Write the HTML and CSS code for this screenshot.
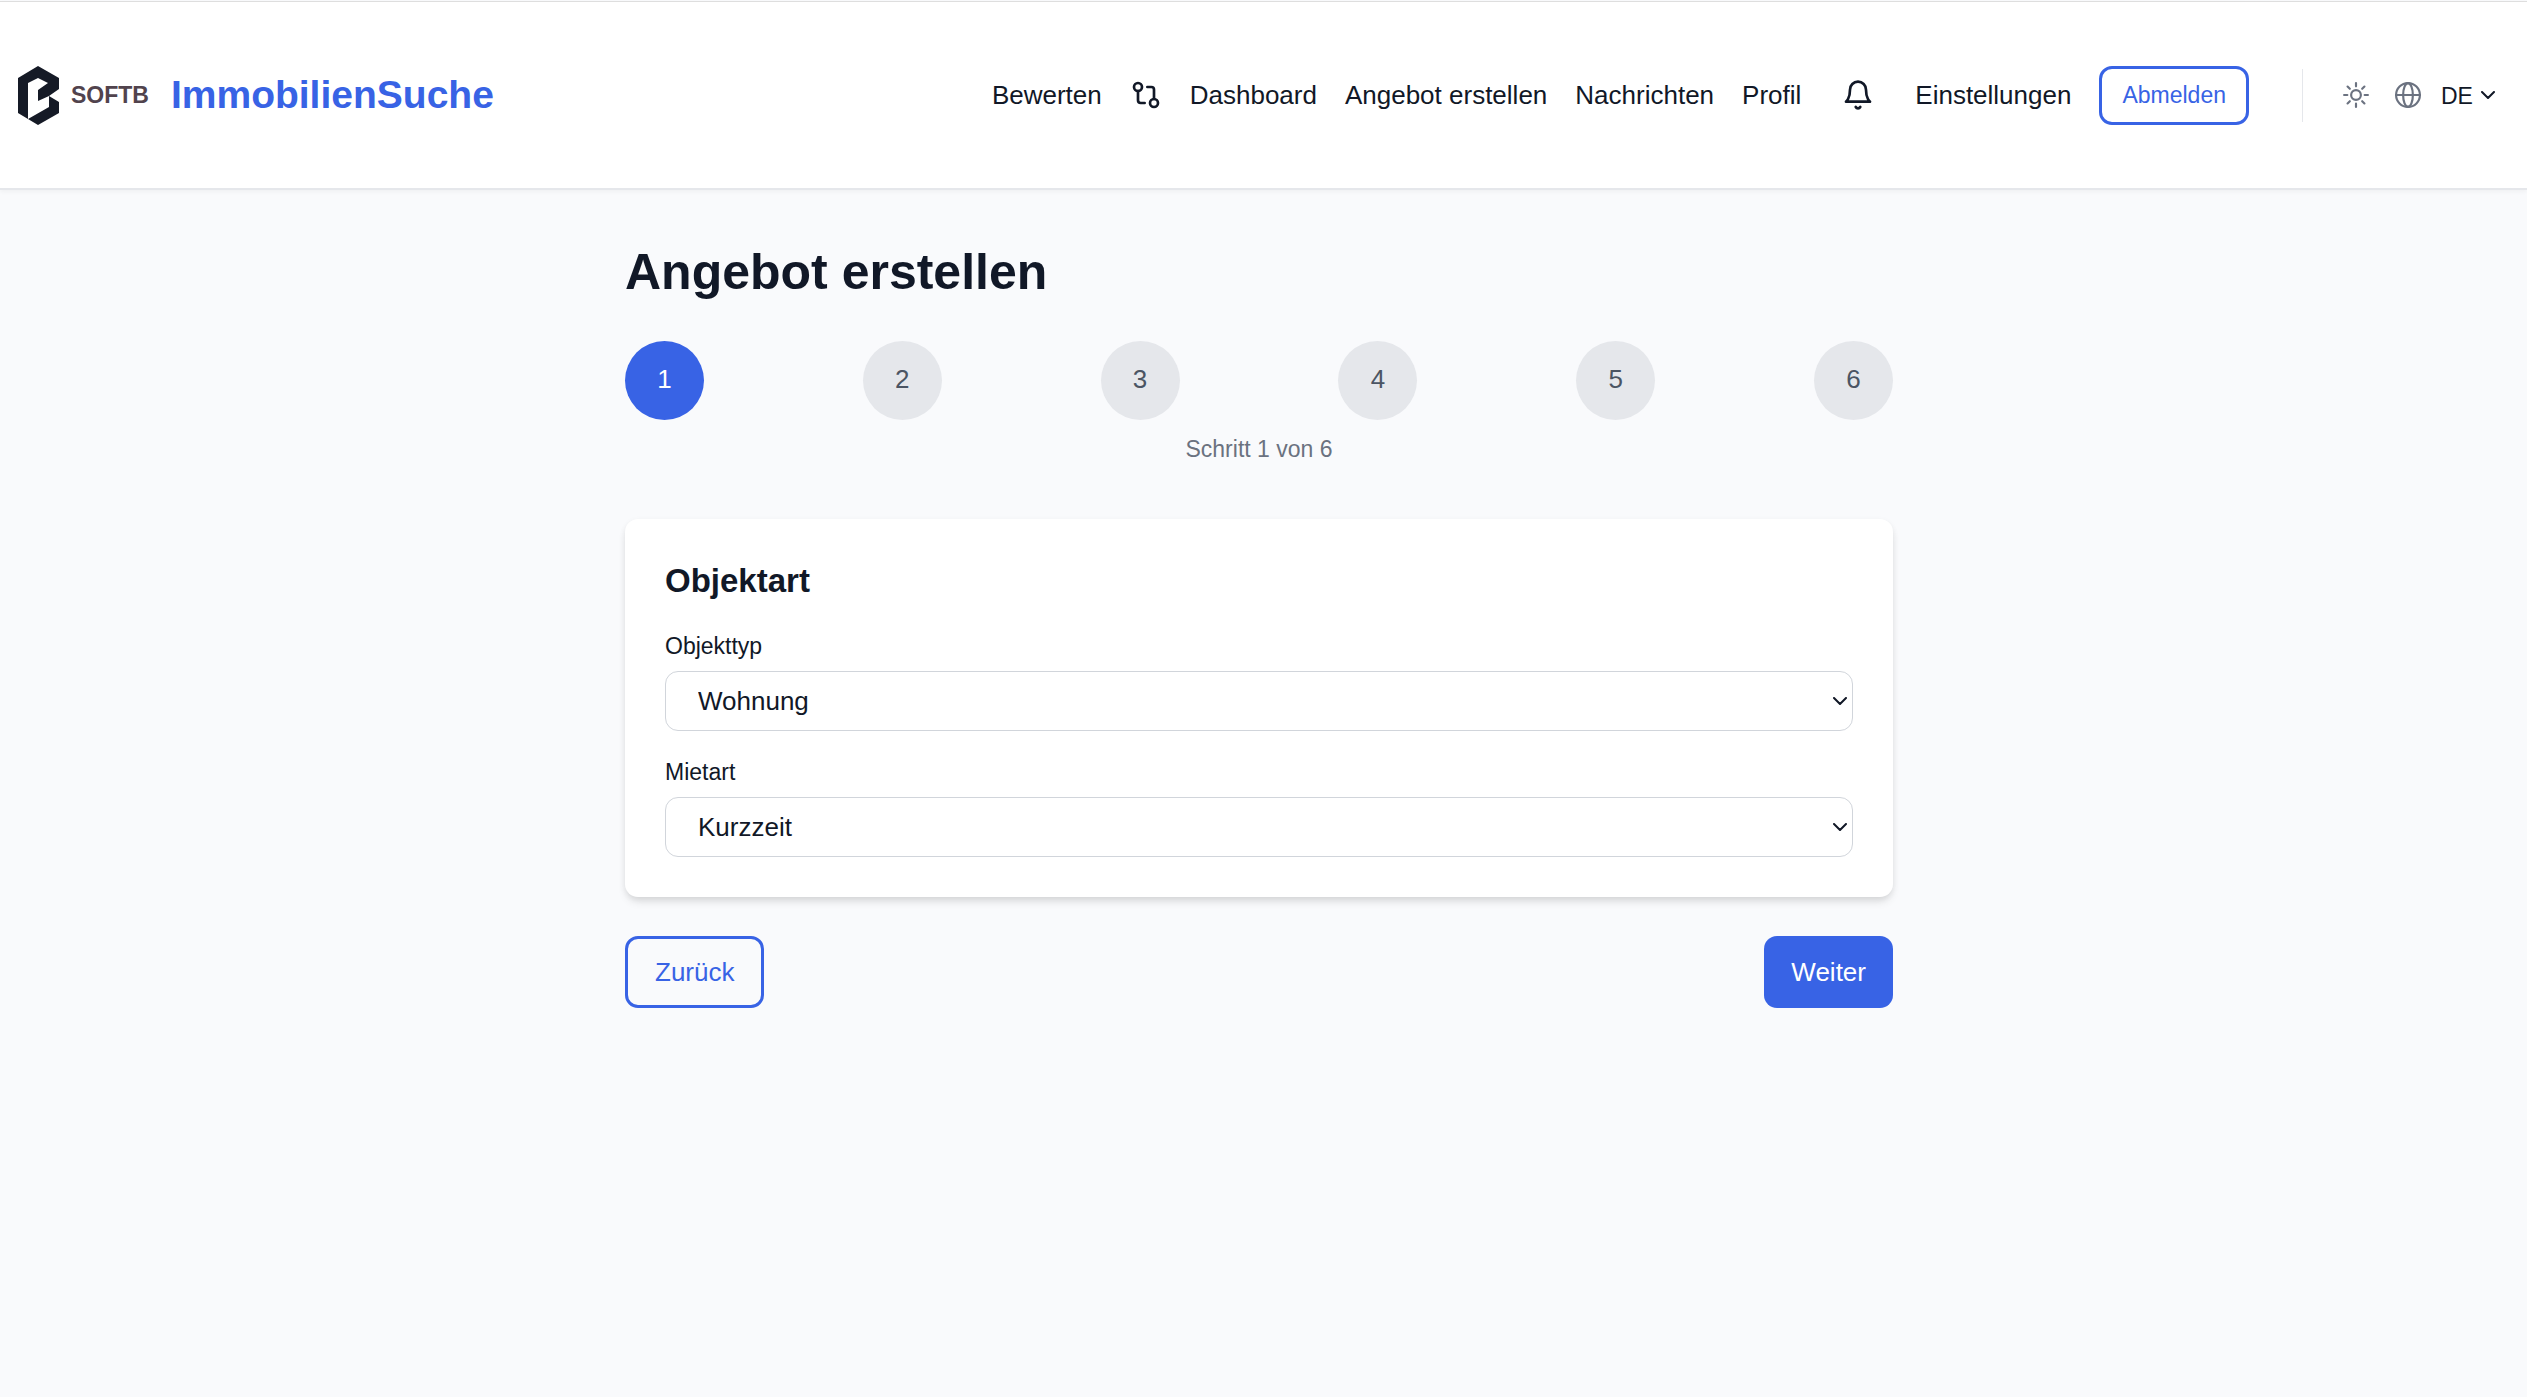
FILE: index.html
```html
<!DOCTYPE html>
<html lang="de">

<head>
  <meta charset="UTF-8" />
  <title>ImmobilienSuche – Angebot erstellen</title>
  <meta name="viewport" content="width=device-width, initial-scale=1.0" />
  <link rel="stylesheet" href="styles.css">
</head>

<body>

  <header class="site-header">
    <a class="brand" href="#">
      <svg class="brand-mark" viewBox="0 0 41 59" aria-hidden="true">
        <path fill="#151a26" fill-rule="evenodd" d="M20 0 41 12v11l-10 7 10 6v11L20 59 0 47V12zM20 12 10 17v36l21-12V30l-11 5V24l10-7z" />
      </svg>
      <span class="brand-company">SOFTB</span>
      <span class="brand-name">ImmobilienSuche</span>
    </a>

    <nav class="main-nav">
      <a href="#">Bewerten</a>
      <a class="nav-compare" href="#" aria-label="Vergleichen">
        <svg class="icon" viewBox="0 0 24 24" aria-hidden="true">
          <circle cx="6" cy="6" r="3" />
          <circle cx="18" cy="18" r="3" />
          <path d="M13 6h3a2 2 0 0 1 2 2v7M11 18H8a2 2 0 0 1-2-2V9" />
        </svg>
      </a>
      <a href="#">Dashboard</a>
      <a href="#">Angebot erstellen</a>
      <a href="#">Nachrichten</a>
      <a href="#">Profil</a>
      <button class="nav-bell" type="button" aria-label="Benachrichtigungen">
        <svg class="icon" viewBox="0 0 24 24" aria-hidden="true">
          <path d="M6 8a6 6 0 0 1 12 0c0 7 3 9 3 9H3s3-2 3-9M10.300 21a1.940 1.940 0 0 0 3.400 0" />
        </svg>
      </button>
      <a href="#">Einstellungen</a>
      <button class="btn-logout" type="button">Abmelden</button>
    </nav>

    <div class="preferences">
      <button class="theme-toggle" type="button" aria-label="Design wechseln">
        <svg class="icon-small" viewBox="0 0 24 24" aria-hidden="true">
          <circle cx="12" cy="12" r="4.500" />
          <path d="M12 1v3M12 20v3M1 12h3M20 12h3M4.200 4.200l2.100 2.100M17.700 17.700l2.100 2.100M4.200 19.800l2.100-2.100M17.700 6.300l2.100-2.100" />
        </svg>
      </button>
      <svg class="icon-small" viewBox="0 0 24 24" aria-hidden="true">
        <circle cx="12" cy="12" r="11" />
        <ellipse cx="12" cy="12" rx="4.500" ry="11" />
        <path d="M1 12h22" />
      </svg>
      <div class="select-wrap language">
        <select aria-label="Sprache">
          <option>DE</option>
          <option>EN</option>
        </select>
        <svg class="chevron" viewBox="0 0 14 8" aria-hidden="true"><path d="M1 1l6 6 6-6" /></svg>
      </div>
    </div>
  </header>

  <main class="wizard">
    <h1>Angebot erstellen</h1>

    <ol class="steps">
      <li class="active" aria-current="step">1</li>
      <li>2</li>
      <li>3</li>
      <li>4</li>
      <li>5</li>
      <li>6</li>
    </ol>
    <p class="step-text">Schritt 1 von 6</p>

    <form id="offer-form" class="card">
      <h2>Objektart</h2>
      <div class="field">
        <label for="object-type">Objekttyp</label>
        <div class="select-wrap">
          <select id="object-type">
            <option>Wohnung</option>
            <option>Haus</option>
          </select>
          <svg class="chevron" viewBox="0 0 14 8" aria-hidden="true"><path d="M1 1l6 6 6-6" /></svg>
        </div>
      </div>
      <div class="field">
        <label for="rent-type">Mietart</label>
        <div class="select-wrap">
          <select id="rent-type">
            <option>Kurzzeit</option>
            <option>Langzeit</option>
          </select>
          <svg class="chevron" viewBox="0 0 14 8" aria-hidden="true"><path d="M1 1l6 6 6-6" /></svg>
        </div>
      </div>
    </form>

    <div class="actions">
      <button class="btn btn-outline" type="button">Zurück</button>
      <button class="btn btn-primary" type="submit" form="offer-form">Weiter</button>
    </div>
  </main>

</body>

</html>
```
FILE: styles.css
```css
/* ─── BASE ───────────────────────────────────────────────────────── */
:root {
  --primary: #3863e5;
  --text: #111827;
  --muted: #6b7280;
  --line: #e5e7eb;
}

* {
  box-sizing: border-box;
  margin: 0;
  padding: 0;
}

body {
  min-height: 100vh;
  padding-top: 1px;
  background: #f9fafc;
  color: var(--text);
  font-family: "Liberation Sans", Arial, sans-serif;
  font-size: 26px;
  line-height: 40px;
}

a {
  color: inherit;
  text-decoration: none;
}

button,
select {
  font: inherit;
  color: inherit;
  background: none;
  border: none;
  cursor: pointer;
}

svg {
  display: block;
  flex: none;
  fill: none;
  stroke: currentColor;
  stroke-width: 2;
  stroke-linecap: round;
  stroke-linejoin: round;
}

/* ─── HEADER ─────────────────────────────────────────────────────── */
.site-header {
  display: flex;
  align-items: center;
  height: 189px;
  padding: 0 32px 0 18px;
  background: #fff;
  border-top: 1px solid #dedede;
  border-bottom: 2px solid var(--line);
  box-shadow: 0 2px 4px rgba(0, 0, 0, 0.04);
}

.brand {
  display: flex;
  align-items: center;
  margin-right: auto;
  font-weight: bold;
}

.brand-mark {
  width: 41px;
  height: 59px;
  margin-right: 12px;
  stroke: none;
}

.brand-company {
  margin-right: 22px;
  color: #51434d;
  font-size: 23px;
}

.brand-name {
  color: var(--primary);
  font-size: 39px;
}

.main-nav {
  display: flex;
  align-items: center;
  gap: 28px;
}

.icon {
  width: 32px;
  height: 32px;
}

.nav-bell {
  padding: 0 13px;
}

.btn-logout {
  height: 59px;
  padding: 0 20px;
  color: var(--primary);
  border: 3px solid var(--primary);
  border-radius: 13px;
  font-size: 23px;
}

.preferences {
  display: flex;
  align-items: center;
  gap: 26px;
  height: 53px;
  margin-left: 53px;
  padding-left: 40px;
  border-left: 1px solid var(--line);
  color: var(--muted);
}

.icon-small {
  width: 26px;
  height: 26px;
}

/* ─── SELECTS ────────────────────────────────────────────────────── */
.select-wrap {
  position: relative;
}

.select-wrap select {
  appearance: none;
  width: 100%;
  height: 60px;
  padding: 0 32px;
  background: #fff;
  border: 1px solid #d1d5db;
  border-radius: 13px;
}

.chevron {
  position: absolute;
  top: calc(50% - 4px);
  right: 6px;
  width: 14px;
  height: 8px;
  pointer-events: none;
}

.language {
  margin-left: -6px;
  color: var(--text);
}

.language select {
  height: 40px;
  padding: 0 22px 0 0;
  border: none;
  font-size: 23px;
}

.language .chevron {
  right: 0;
}

/* ─── WIZARD ─────────────────────────────────────────────────────── */
.wizard {
  width: 1277px;
  max-width: 100%;
  margin: 0 auto;
  padding: 53px 9px 53px 0;
}

h1 {
  margin-bottom: 40px;
  font-size: 50px;
  line-height: 58px;
}

.steps {
  display: flex;
  justify-content: space-between;
  list-style: none;
}

.steps li {
  width: 79px;
  height: 79px;
  border-radius: 50%;
  background: var(--line);
  color: #4b5563;
  line-height: 77px;
  text-align: center;
}

.steps .active {
  background: var(--primary);
  color: #fff;
}

.step-text {
  margin-top: 12px;
  margin-bottom: 53px;
  color: var(--muted);
  font-size: 23px;
  line-height: 34px;
  text-align: center;
}

.card {
  padding: 40px;
  background: #fff;
  border-radius: 13px;
  box-shadow: 0 6px 10px -2px rgba(0, 0, 0, 0.12), 0 2px 6px rgba(0, 0, 0, 0.06);
}

h2 {
  margin-bottom: 26px;
  font-size: 33px;
  line-height: 44px;
}

.field + .field {
  margin-top: 24px;
}

.field label {
  display: block;
  margin-bottom: 8px;
  font-size: 23px;
  line-height: 34px;
}

.actions {
  display: flex;
  justify-content: space-between;
  margin-top: 39px;
}

.btn {
  height: 72px;
  padding: 0 27px;
  border: none;
  border-radius: 13px;
}

.btn-outline {
  border: 3px solid var(--primary);
  color: var(--primary);
}

.btn-primary {
  background: var(--primary);
  color: #fff;
}
```
